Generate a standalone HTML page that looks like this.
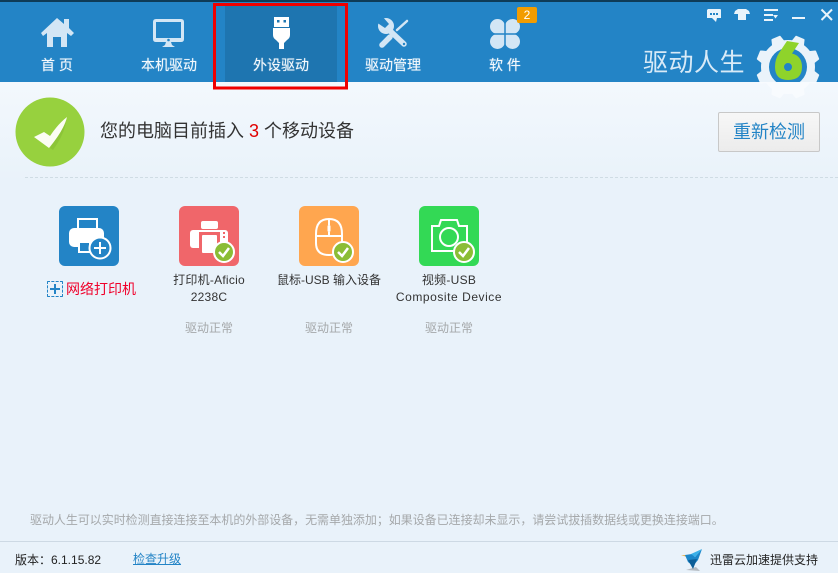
<!DOCTYPE html>
<html><head><meta charset="utf-8">
<style>
html,body{margin:0;padding:0}
body{width:838px;height:573px;overflow:hidden;position:relative;background:#e9f2fa;font-family:"Liberation Sans","Noto Sans CJK SC",sans-serif;color:#333}
.a{position:absolute;white-space:nowrap}
.c{text-align:center}
.nav{top:56px;height:18px;line-height:18px;font-size:14px;color:#f4f9fd;text-align:center;width:112px;text-shadow:0 0 1px rgba(255,255,255,.6)}
.lbl{font-size:12px;line-height:17px;text-align:center;color:#333;width:120px;letter-spacing:.25px}
.st{font-size:12px;line-height:16px;text-align:center;color:#a5a8aa;width:120px;top:320px}
.ic{top:206px;width:60px;height:60px;border-radius:6px}
svg{position:absolute;left:0;top:0}
</style></head><body>
<div class="a" style="left:0;top:82px;width:838px;height:100px;background:linear-gradient(#f3f8fd,#e9f2fa)"></div>
<div class="a" style="left:0;top:0;width:838px;height:82px;background:#2384c6"></div>
<div class="a" style="left:0;top:0;width:838px;height:2px;background:#0e3b57"></div>
<div class="a" style="left:225px;top:5px;width:112px;height:77px;background:#1e75b0"></div>

<svg width="838" height="573" viewBox="0 0 838 573">
<defs>
<clipPath id="hd"><rect x="740" y="0" width="98" height="82"/></clipPath>
<clipPath id="bl"><rect x="740" y="82" width="98" height="20"/></clipPath>
</defs>
<!-- home -->
<path fill="#d3e6f5" d="M57 18 L64 24 V19 H69 V28 L74 33 L71 36 L67 33 V47 H61 V37 H53 V47 H47 V33 L43 36 L41 33Z"/>
<!-- monitor -->
<path fill="#d3e6f5" fill-rule="evenodd" d="M156 19 H181 Q184 19 184 22 V39 Q184 42 181 42 H156 Q153 42 153 39 V22 Q153 19 156 19Z M156 22 V38 H181 V22Z"/>
<circle cx="168.500" cy="40" r="1.300" fill="#2384c6"/>
<path fill="#d3e6f5" d="M166 42 H171 L172 45 L175 47 H162 L165 45Z"/>
<!-- usb -->
<path fill="#fff" fill-rule="evenodd" d="M274 17 H289 V27 H274Z M277 20 V22.500 H279.500 V20Z M283.500 20 V22.500 H286 V20Z" />
<path fill="#fff" d="M273 28 H290 V35 Q290 38 287 40 L284 43 V49 H279 V43 L276 40 Q273 38 273 35Z"/>
<!-- tools -->
<g fill="none" stroke="#d3e6f5" stroke-linecap="round">
<path stroke-width="5.500" d="M386 27 L404 44"/>
<path stroke-width="2.500" d="M397 30 L407 21"/>
<path stroke-width="5.500" d="M390 37 L382 45"/>
</g>
<circle cx="386" cy="26" r="8" fill="#d3e6f5"/>
<polygon points="376,22 382,16 389,24 385,28" fill="#2384c6"/>
<circle cx="404" cy="44" r="1.200" fill="#2384c6"/>
<!-- clover -->
<g fill="#d3e6f5">
<circle cx="497.500" cy="26.500" r="7.500"/><circle cx="512.500" cy="26.500" r="7.500"/>
<circle cx="497.500" cy="41.500" r="7.500"/><circle cx="512.500" cy="41.500" r="7.500"/>
<rect x="497" y="26" width="16" height="16"/>
</g>
<path stroke="#2384c6" stroke-width="1.500" d="M505 18 V50 M489 34 H521"/>
<rect x="517" y="7" width="20" height="16" rx="2" fill="#f29c00"/>
<!-- window controls -->
<path fill="#eaf4fb" d="M708 9 H720 Q721 9 721 10 V18 H717 L716 22 L712 18 H707 V10Z"/>
<g fill="#2384c6"><rect x="710" y="13" width="2" height="2"/><rect x="713" y="13" width="2" height="2"/><rect x="716" y="13" width="2" height="2"/></g>
<path fill="#eaf4fb" d="M738 9 H746 L749 11 L750 14 L746 14 V20 H738 V14 L734 14 L735 11Z"/>
<path fill="#eaf4fb" d="M764 9 H778 V11 H764Z M764 14 H773 V16 H764Z M764 19 H773 V21 H764Z M773 15 H778 L775.500 18.500Z"/>
<rect x="792" y="17" width="13" height="2" fill="#eaf4fb"/>
<path stroke="#eaf4fb" stroke-width="2" d="M821.500 9.500 L832 20 M832 9.500 L821.500 20"/>
<!-- gear: upper part on the header -->
<g clip-path="url(#hd)">
<g fill="#eaf3fa" stroke="#eaf3fa" stroke-width="2" stroke-linejoin="round" transform="translate(788 67)">
<circle r="26"/>
<polygon points="-6,-24 -4,-31 4,-31 6,-24" transform="rotate(22.500)"/>
<polygon points="-6,-24 -4,-31 4,-31 6,-24" transform="rotate(67.500)"/>
<polygon points="-6,-24 -4,-31 4,-31 6,-24" transform="rotate(112.500)"/>
<polygon points="-6,-24 -4,-31 4,-31 6,-24" transform="rotate(247.500)"/>
<polygon points="-6,-24 -4,-31 4,-31 6,-24" transform="rotate(292.500)"/>
<polygon points="-6,-24 -4,-31 4,-31 6,-24" transform="rotate(337.500)"/>
</g>
<circle cx="788" cy="67" r="19" fill="#2384c6"/>
</g>
<!-- gear: pale part below the header -->
<g clip-path="url(#bl)">
<g fill="#f8fbfe" stroke="#f8fbfe" stroke-width="2" stroke-linejoin="round" transform="translate(788 67)">
<circle r="26"/>
<polygon points="-6,-24 -4,-31 4,-31 6,-24" transform="rotate(112.500)"/>
<polygon points="-6,-24 -4,-31 4,-31 6,-24" transform="rotate(157.500)"/>
<polygon points="-6,-24 -4,-31 4,-31 6,-24" transform="rotate(202.500)"/>
<polygon points="-6,-24 -4,-31 4,-31 6,-24" transform="rotate(247.500)"/>
</g>
</g>
<path fill="#8fd32b" fill-rule="evenodd" d="M787 41 L799 43 L792 53.500 Q802 56 802 67 Q802 80 788 80 Q775 80 775 67 Q775 59 779 53Z M788 63 A4 4 0 1 0 788 71 A4 4 0 1 0 788 63Z"/>
<!-- red selection -->
<rect x="214.500" y="4.500" width="132" height="83.500" fill="none" stroke="#f00000" stroke-width="3"/>
<!-- green circle -->
<circle cx="50" cy="132" r="34.500" fill="#97d13e"/>
<path fill="#7fb62f" opacity=".45" d="M50 148 L66 119 Q66 132 53 150Z"/>
<path fill="#fbfdf3" d="M34 137 L44 132 L50 136 Q58 124 67 117 Q64 130 49 148Z"/>
<!-- dotted line -->
<line x1="25" y1="177.500" x2="838" y2="177.500" stroke="#cfdce4" stroke-width="1" stroke-dasharray="3 2"/>
<!-- footer line -->
<rect x="0" y="541" width="838" height="1" fill="#cdd9e4"/>
<!-- bird -->
<path fill="#e6b04e" d="M681 555 L689 555 L687 557Z"/>
<path fill="#1b86c9" d="M702 549 L698 560 L693 566 L688 562 L685 555 L692 554 L695 557Z"/>
<path fill="#0d5f98" d="M693 569 L688 560 L697 559Z"/>
<path fill="#555" opacity=".35" d="M686 570 L700 571 L696 567Z"/>
<path fill="#3ab0e8" d="M702 549 L695 557 L691 554Z"/>
</svg>

<div class="a" style="left:517px;top:7px;width:20px;height:16px;line-height:16px;text-align:center;color:#fff;font-size:12px">2</div>
<div class="a nav" style="left:1px">首 页</div>
<div class="a nav" style="left:113px">本机驱动</div>
<div class="a nav" style="left:225px">外设驱动</div>
<div class="a nav" style="left:337px">驱动管理</div>
<div class="a nav" style="left:449px">软 件</div>
<div class="a" style="left:643px;top:47px;font-size:25px;line-height:32px;color:#d8eaf7;letter-spacing:.500px">驱动人生</div>

<div class="a" style="left:100px;top:119px;font-size:18px;line-height:24px;color:#333">您的电脑目前插入 <span style="color:#e00000">3</span> 个移动设备</div>
<div class="a c" style="left:718px;top:112px;width:100px;height:38px;line-height:38px;border:1px solid #c8c8c8;border-radius:2px;background:linear-gradient(#f7f7f7,#ececec);color:#2384c6;font-size:18px">重新检测</div>

<div class="a ic" style="left:59px;background:#2384c6">
<svg width="60" height="60" viewBox="0 0 60 60">
<path fill="none" stroke="#fff" stroke-width="2" d="M19 22 V13 H38 V22"/>
<rect x="10" y="22" width="35" height="19" rx="5" fill="#fff"/>
<rect x="20" y="36" width="11" height="10" fill="#2384c6" stroke="#fff" stroke-width="2"/>
<circle cx="41" cy="42" r="10.500" fill="#2384c6" stroke="#fff" stroke-width="2"/>
<path stroke="#fff" stroke-width="2" d="M35 42 H47 M41 36 V48"/>
</svg></div>
<div class="a ic" style="left:179px;background:#f0666a">
<svg width="60" height="60" viewBox="0 0 60 60">
<rect x="22" y="15" width="17" height="8" rx="2" fill="#fff"/>
<rect x="11" y="24" width="38" height="18" rx="3" fill="#fff"/>
<rect x="20" y="26" width="21" height="24" fill="#f0666a"/>
<rect x="23" y="29" width="15" height="18" rx="1" fill="#fff"/>
<g fill="#f0666a"><rect x="44" y="26" width="2" height="2"/><rect x="44" y="30" width="2" height="2"/></g>
<circle cx="45" cy="46" r="10" fill="#8bbd35" stroke="#fff" stroke-width="2"/>
<path fill="none" stroke="#fff" stroke-width="2.500" d="M40 46 L44 50 L50 42"/>
</svg></div>
<div class="a ic" style="left:299px;background:#ffa64f">
<svg width="60" height="60" viewBox="0 0 60 60">
<path fill="none" stroke="#fff" stroke-width="2" d="M30 13 Q17 13 17 28 V37 Q17 49 30 49 Q43 49 43 37 V28 Q43 13 30 13Z M17 30 H43 M30 13 V19 M30 26 V30"/>
<rect x="28.500" y="19" width="3" height="7" rx="1.500" fill="#fff"/>
<circle cx="44" cy="46" r="10" fill="#8bbd35" stroke="#fff" stroke-width="2"/>
<path fill="none" stroke="#fff" stroke-width="2.500" d="M39 46 L43 50 L49 42"/>
</svg></div>
<div class="a ic" style="left:419px;background:#33d955">
<svg width="60" height="60" viewBox="0 0 60 60">
<path fill="none" stroke="#fff" stroke-width="2" d="M13 20 H20 L22 14 H38 L40 20 H48 V45 H13Z"/>
<circle cx="30" cy="31" r="9" fill="none" stroke="#fff" stroke-width="2"/>
<circle cx="45" cy="46" r="10" fill="#8bbd35" stroke="#fff" stroke-width="2"/>
<path fill="none" stroke="#fff" stroke-width="2.500" d="M40 46 L44 50 L50 42"/>
</svg></div>

<div class="a" style="left:47px;top:281px;width:14px;height:14px;border:1px dashed #2384c6;border-radius:1px">
<svg width="14" height="14"><path stroke="#2384c6" stroke-width="2" d="M2 7 H12 M7 2 V12"/></svg></div>
<div class="a" style="left:66px;top:280px;font-size:14px;line-height:18px;color:#f0002a">网络打印机</div>

<div class="a lbl" style="left:149px;top:272px">打印机-Aficio<br>2238C</div>
<div class="a lbl" style="left:269px;top:272px;letter-spacing:0">鼠标-USB 输入设备</div>
<div class="a lbl" style="left:389px;top:272px">视频-USB<br><span style="letter-spacing:.55px">Composite Device</span></div>
<div class="a st" style="left:149px">驱动正常</div>
<div class="a st" style="left:269px">驱动正常</div>
<div class="a st" style="left:389px">驱动正常</div>

<div class="a" style="left:30px;top:512px;font-size:12px;line-height:16px;color:#a5a8aa;letter-spacing:-.04px">驱动人生可以实时检测直接连接至本机的外部设备，无需单独添加；如果设备已连接却未显示，请尝试拔插数据线或更换连接端口。</div>
<div class="a" style="left:15px;top:552px;font-size:12px;line-height:16px;color:#222">版本：6.1.15.82</div>
<div class="a" style="left:133px;top:551px;font-size:12px;line-height:16px;color:#2384c6;text-decoration:underline">检查升级</div>
<div class="a" style="left:710px;top:552px;font-size:12px;line-height:16px;color:#222">迅雷云加速提供支持</div>
</body></html>
